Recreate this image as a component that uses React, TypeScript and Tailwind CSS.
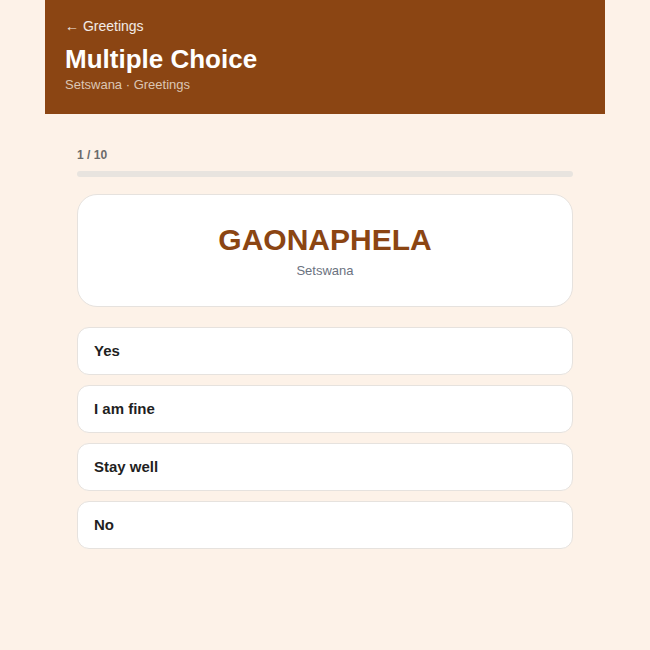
import React from 'react';

const options = ['Yes', 'I am fine', 'Stay well', 'No'];

export default function App() {
  const current = 1;
  const total = 10;

  return (
    <div
      className="min-h-screen bg-[#fdf2e8]"
      style={{ fontFamily: '"Liberation Sans", Arial, sans-serif' }}
    >
      <div className="mx-auto w-[560px]">
        {/* Header */}
        <header className="bg-[#8b4513] px-5 pt-[14px] pb-[21px] text-white">
          <button className="text-[14px] leading-[18px] text-white/90">← Greetings</button>
          <h1 className="mt-[6px] text-[26px] font-bold leading-[30px]">Multiple Choice</h1>
          <p className="mt-[3px] text-[13px] leading-[16px] text-[#dcc6b3]">Setswana · Greetings</p>
        </header>

        <main className="px-8 pt-[33px]">
          {/* Progress */}
          <div className="text-[12px] font-bold leading-[16px] text-[#6b6b6b]">
            {current} / {total}
          </div>
          <div className="mt-[8px] h-[6px] w-full rounded-full bg-[#e8e4df]">
            <div
              className="h-full rounded-full bg-[#8b4513]"
              style={{ width: `${((current - 1) / total) * 100}%` }}
            />
          </div>

          {/* Prompt card */}
          <div className="mt-[17px] flex h-[113px] flex-col items-center justify-center rounded-[20px] border border-[#e6e2de] bg-white">
            <div className="text-[30px] font-bold leading-[34px] text-[#8b4513]">GAONAPHELA</div>
            <div className="mt-[6px] text-[13px] leading-[16px] text-[#6b7280]">Setswana</div>
          </div>

          {/* Answer options */}
          <div className="mt-[20px] flex flex-col gap-[10px]">
            {options.map((opt) => (
              <button
                key={opt}
                className="flex h-[48px] items-center rounded-[12px] border border-[#e6e2de] bg-white px-4 text-left text-[15px] font-bold text-[#1f1f1f]"
              >
                {opt}
              </button>
            ))}
          </div>
        </main>
      </div>
    </div>
  );
}
